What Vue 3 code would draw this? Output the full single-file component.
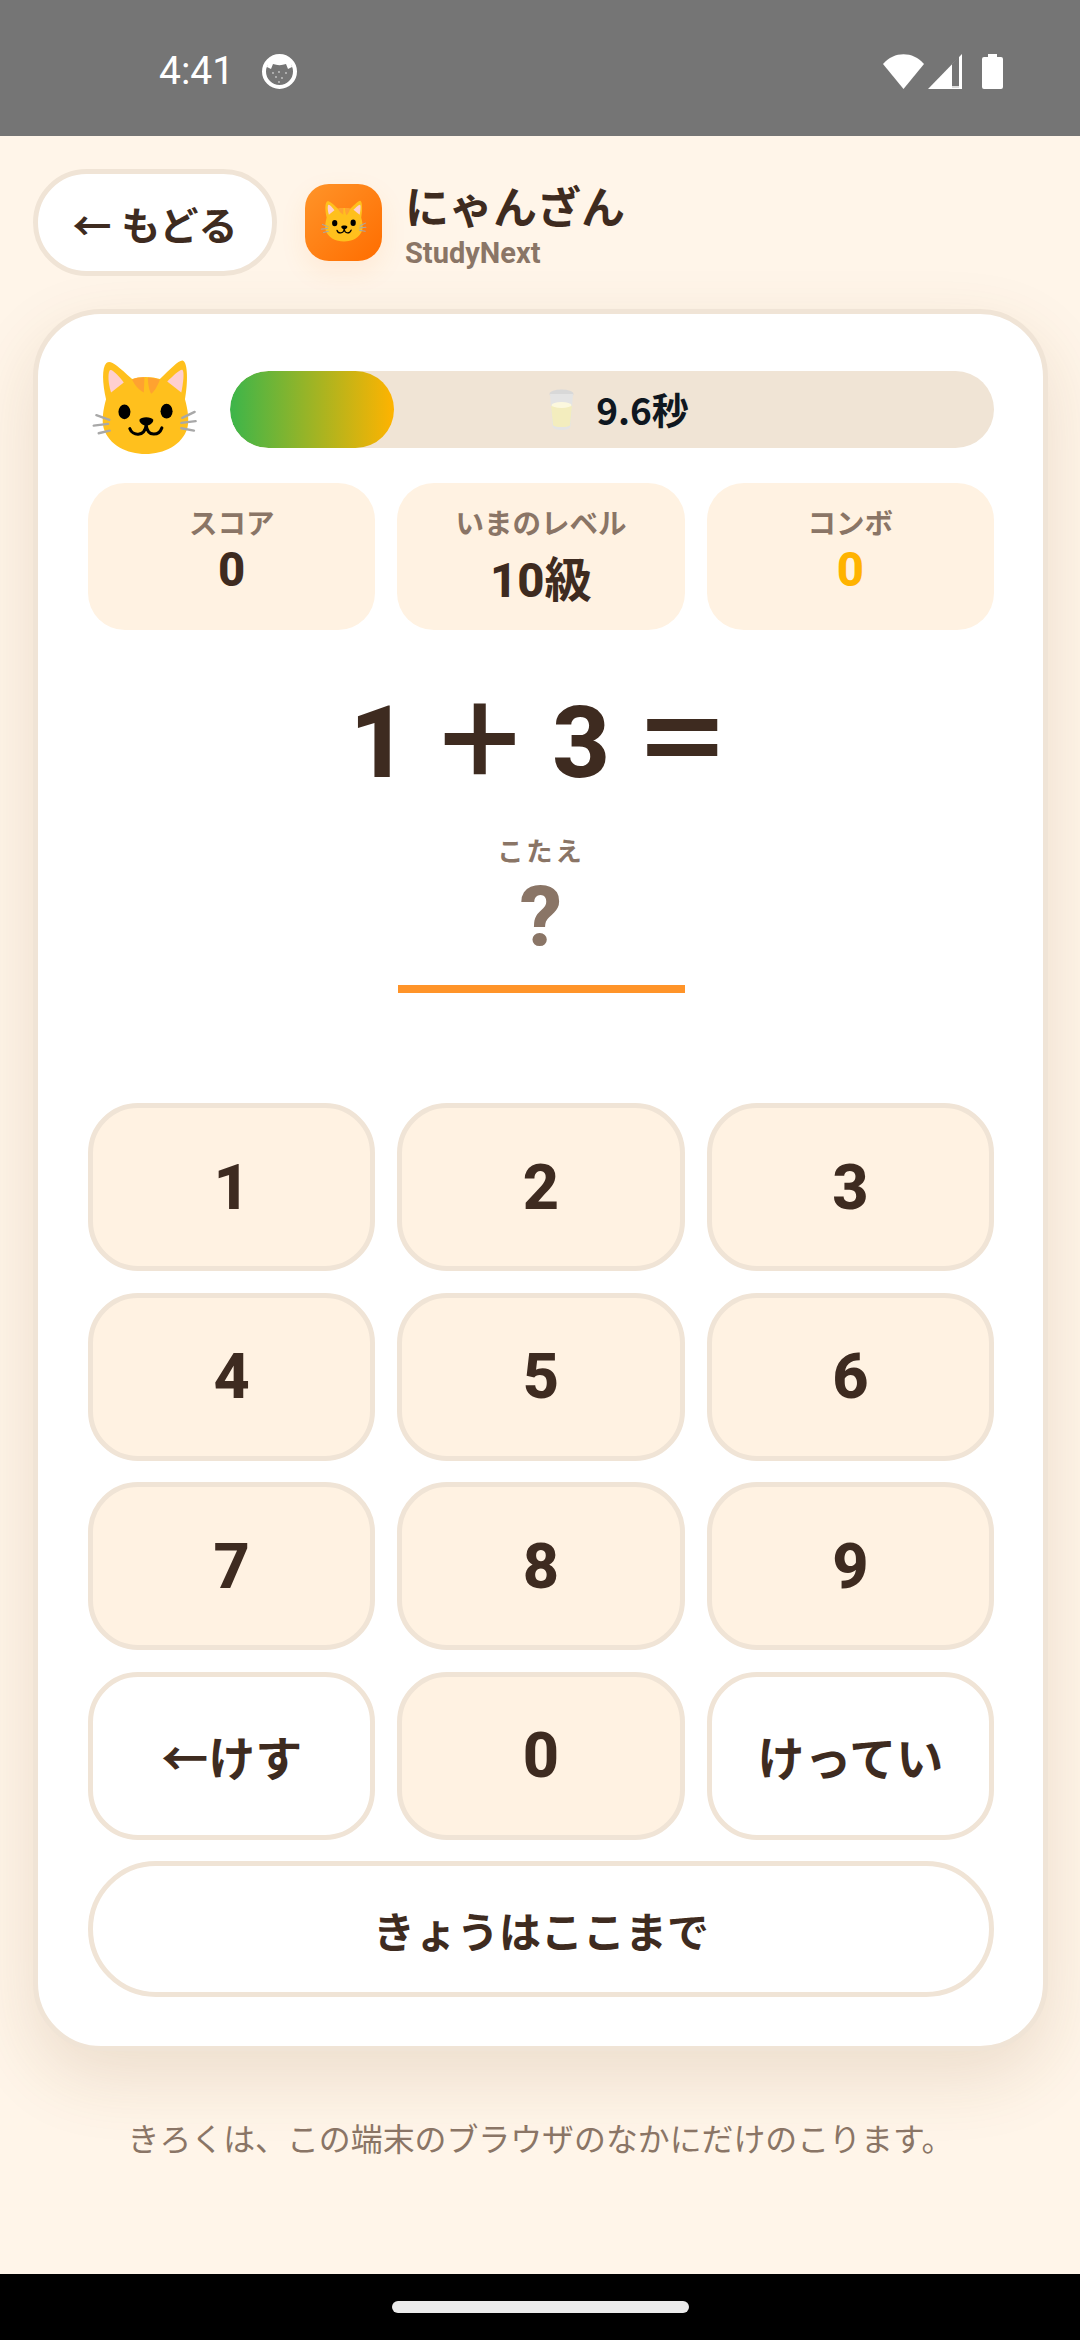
<script setup>
const keys = ['1','2','3','4','5','6','7','8','9']
</script>

<template>
  <div class="screen">
    <div class="status">
      <span class="time">4:41</span>
      <svg class="notif" viewBox="0 0 35 35">
        <circle cx="17.5" cy="17.5" r="15.5" fill="#757575" stroke="#fff" stroke-width="4"/>
        <path d="M5 13 C6 6 10 3 17.5 3 C25 3 29 6 30 13 L26 15 L24 10 C20 11.500 15 11.500 11 10 L9 15Z" fill="#fff"/>
        <g fill="#c8c8c8"><circle cx="11" cy="19" r=".9"/><circle cx="17" cy="18" r=".9"/><circle cx="24" cy="19" r=".9"/><circle cx="14" cy="23" r=".9"/><circle cx="20" cy="24" r=".9"/><circle cx="17" cy="28" r=".9"/></g>
      </svg>
      <span class="grow"></span>
      <svg class="wifi" viewBox="0 0 41 35"><path d="M0 10 C11 -3 30 -3 41 10 L20.5 35Z" fill="#fff"/></svg>
      <svg class="signal" viewBox="0 0 34 35"><path d="M34 0 V35 H0Z" fill="#fff"/><path d="M24 10 L31 2 V32 H24Z" fill="#757575"/><path d="M24 32 H31 V34 H24Z" fill="#ddd"/></svg>
      <svg class="battery" viewBox="0 0 21 35"><path d="M6 0 H15 V3 H19 Q21 3 21 5 V33 Q21 35 19 35 H2 Q0 35 0 33 V5 Q0 3 2 3 H6Z" fill="#fff"/></svg>
    </div>

    <main class="main">
      <header class="head">
        <button class="back">← もどる</button>
        <div class="logo">
          <svg class="logo-cat" viewBox="62 58 320 287">
            <defs>
              <g id="cat-art">
                <path d="M108 70 C120 60 135 72 185 118 C205 110 245 110 268 118 C300 88 325 60 337 63 C352 68 352 130 343 178 C352 210 356 240 350 265 C335 315 280 342 225 342 C170 342 115 315 100 265 C94 240 98 210 107 178 C96 130 94 85 108 70Z" fill="#ffc01d"/>
                <path d="M118 92 C125 85 150 115 160 128 L122 158 C113 130 112 100 118 92Z" fill="#ffcfd0"/>
                <path d="M335 90 C328 88 305 110 290 125 L332 158 C338 130 342 95 335 90Z" fill="#ffcfd0"/>
                <path d="M185 120 C195 114 215 112 222 113 L220 158 C205 150 195 140 185 120Z" fill="#ffa230"/>
                <path d="M232 113 C245 113 258 116 268 120 C260 140 252 155 242 162 C235 150 232 130 232 113Z" fill="#ffa230"/>
                <ellipse cx="162" cy="216" rx="18" ry="22"/>
                <ellipse cx="288" cy="214" rx="18" ry="22"/>
                <path d="M207 240 C210 230 244 230 248 240 C250 250 235 258 227 258 C220 258 205 250 207 240Z"/>
                <path d="M178 266 C185 288 222 292 227 256 C232 292 265 288 274 264" fill="none" stroke="#000" stroke-width="9" stroke-linecap="round"/>
                <g stroke="#a8a8a8" stroke-width="7" stroke-linecap="round">
                  <path d="M78 226 L117 240M70 257 L113 252M85 280 L118 272M372 216 L335 234M375 244 L332 249M370 272 L332 265"/>
                </g>
              </g>
            </defs>
            <use href="#cat-art"/>
          </svg>
        </div>
        <div class="titles">
          <div class="title">にゃんざん</div>
          <div class="sub">StudyNext</div>
        </div>
      </header>

      <section class="card">
        <div class="top">
          <svg class="cat" viewBox="62 58 320 287"><use href="#cat-art"/></svg>
          <div class="bar">
            <div class="fill"></div>
            <div class="bar-label">
              <svg class="milk" viewBox="0 0 25 41">
                <ellipse cx="12.500" cy="5" rx="12" ry="4.500" fill="#d8d8d8"/>
                <path d="M1 5 L3.500 37 Q4 41 12.500 41 Q21 41 21.500 37 L24 5Z" fill="#e4e4e4"/>
                <path d="M2 17 Q12.500 13 23 17 L21 36 Q20 38 12.500 38 Q5 38 4 36Z" fill="#f3edbe"/>
                <ellipse cx="12.500" cy="16" rx="10" ry="3" fill="#fcf8de"/>
              </svg>
              <span>9.6秒</span>
            </div>
          </div>
        </div>

        <div class="stats">
          <div class="stat"><div class="stat-label">スコア</div><div class="stat-value">0</div></div>
          <div class="stat"><div class="stat-label">いまのレベル</div><div class="stat-value">10<span class="kan">級</span></div></div>
          <div class="stat"><div class="stat-label">コンボ</div><div class="stat-value combo">0</div></div>
        </div>

        <div class="equation">1 ＋ 3 ＝</div>

        <div class="answer">
          <div class="answer-label">こたえ</div>
          <div class="answer-value">?</div>
        </div>

        <div class="keys">
          <button v-for="k in keys" :key="k" class="key digit">{{ k }}</button>
          <button class="key action">←けす</button>
          <button class="key digit">0</button>
          <button class="key action">けってい</button>
          <button class="key finish">きょうはここまで</button>
        </div>
      </section>

      <p class="foot">きろくは、この端末のブラウザのなかにだけのこります。</p>
    </main>

    <div class="nav"><span class="pill"></span></div>
  </div>
</template>

<style>
html, body { margin: 0; background: #fff5e9; }
</style>

<style scoped>
.screen {
  width: 1080px;
  height: 2340px;
  display: flex;
  flex-direction: column;
  overflow: hidden;
  background: #fff5e9;
  color: #3e2b20;
  font-family: Roboto, "Noto Sans CJK JP", sans-serif;
}
.status {
  height: 136px;
  flex: none;
  background: #757575;
  display: flex;
  align-items: center;
  padding: 6px 77px 0 159px;
  box-sizing: border-box;
}
.time { color: #fff; font-size: 39px; line-height: 46px; width: 103px; }
.notif { width: 35px; height: 35px; }
.grow { flex: 1; }
.wifi { width: 41px; height: 35px; }
.signal { width: 34px; height: 35px; margin-left: 4px; }
.battery { width: 21px; height: 35px; margin-left: 20px; }

.main { flex: 1; padding: 33px 32px 0 33px; box-sizing: border-box; min-height: 0; }
.head { display: flex; align-items: center; height: 107px; }
button { font-family: inherit; color: inherit; cursor: pointer; }
.kan { font-weight: 700; }
.back {
  width: 244px;
  height: 107px;
  padding: 0;
  border: 5px solid #f0e4d6;
  border-radius: 54px;
  background: #fff;
  font-size: 39px;
  font-weight: 700;
}
.logo {
  width: 77px;
  height: 77px;
  margin-left: 28px;
  border-radius: 24px;
  background: linear-gradient(135deg, #ff9429, #ff6d00);
  box-shadow: 0 10px 26px rgba(255, 140, 40, .1);
  display: flex;
  align-items: center;
  justify-content: center;
}
.logo-cat { width: 47px; height: 42px; margin-top: -4px; }
.titles { margin: 8px 0 0 23px; }
.title { font-size: 44px; font-weight: 700; line-height: 52px; }
.sub { font-size: 29px; font-weight: 700; line-height: 36px; color: #8a7566; }

.card {
  margin-top: 33px;
  height: 1742px;
  box-sizing: border-box;
  padding: 46px 49px 0 50px;
  border: 5px solid #f0e4d6;
  border-radius: 68px;
  background: #fff;
  box-shadow: 0 26px 70px rgba(120, 80, 30, .14);
}
.top { display: flex; align-items: center; height: 98px; }
.cat { width: 107px; height: 96px; margin: -4px 0 0 3px; flex: none; }
.bar {
  position: relative;
  margin-left: 32px;
  flex: 1;
  height: 77px;
  border-radius: 39px;
  background: #f0e4d5;
  overflow: hidden;
}
.fill {
  position: absolute;
  inset: 0 auto 0 0;
  width: 164px;
  border-radius: 39px;
  background: linear-gradient(90deg, #3cb54a, #ffb300);
}
.bar-label {
  position: relative;
  height: 100%;
  padding-left: 14px;
  box-sizing: border-box;
  display: flex;
  align-items: center;
  justify-content: center;
  gap: 22px;
  font-size: 37px;
  font-weight: 700;
  color: #0f1720;
  font-family: "Noto Sans CJK JP", sans-serif;
}
.milk { width: 25px; height: 41px; }

.stats { margin-top: 25px; display: grid; grid-template-columns: repeat(3, 1fr); gap: 22px; }
.stat {
  height: 147px;
  border-radius: 37px;
  background: #fff2e2;
  text-align: center;
  padding-top: 24px;
  box-sizing: border-box;
}
.stat-label { font-size: 28.500px; font-weight: 700; line-height: 36px; color: #8a7566; }
.stat-value { font-size: 47.250px; font-weight: 800; line-height: normal; margin-top: -1px; }
.combo { color: #ffb300; }

.equation {
  margin-top: 63px;
  font-size: 100px;
  font-weight: 800;
  line-height: 100px;
  height: 100px;
  text-align: center;
  word-spacing: -2.500px;
}
.answer { margin: 43px auto 0; width: 287px; text-align: center; border-bottom: 8px solid #ff9429; padding-bottom: 25px; }
.answer-label { font-size: 26.250px; font-weight: 700; line-height: 32px; letter-spacing: 3px; color: #8a7566; }
.answer-value { margin-top: 8px; font-size: 84px; font-weight: 800; line-height: 84px; color: #8a7566; }

.keys {
  margin-top: 110px;
  display: grid;
  grid-template-columns: repeat(3, 1fr);
  grid-auto-rows: 168px;
  gap: 21.500px 22px;
}
.key {
  padding: 0;
  border: 5px solid #f0e4d6;
  border-radius: 50px;
  font-weight: 700;
}
.digit { background: #fff2e2; font-size: 63px; font-weight: 800; }
.action { background: #fff; font-size: 47px; }
.finish {
  grid-column: 1 / -1;
  height: 136px;
  border-radius: 68px;
  background: #fff;
  font-size: 42px;
}

.foot {
  margin: 69px 0 0;
  font-size: 31.900px;
  line-height: 40px;
  text-align: center;
  color: #8a7566;
}
.nav { height: 66px; flex: none; background: #000; display: flex; justify-content: center; padding-top: 27px; box-sizing: border-box; }
.pill { width: 297px; height: 12px; border-radius: 6px; background: #ebebeb; }
</style>
